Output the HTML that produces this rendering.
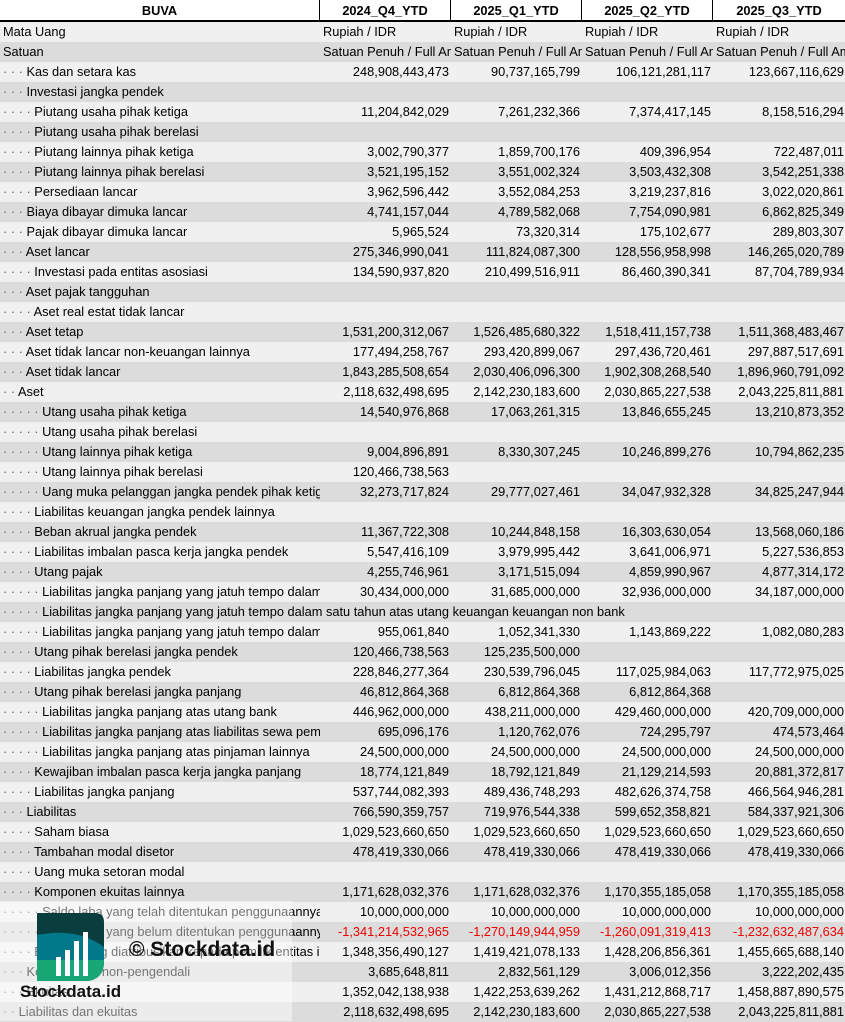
<!DOCTYPE html>
<html><head><meta charset="utf-8"><style>
*{margin:0;padding:0;box-sizing:border-box}
body{width:845px;height:1021px;overflow:hidden;background:#fff;font-family:"Liberation Sans",sans-serif;font-size:12.8px;color:#000;position:relative}
.r{display:flex;height:20px;line-height:20px;white-space:nowrap}
.r:nth-child(odd){background:#f0f0f0}
.r:nth-child(even){background:#dcdcdc}
.r>div{overflow:hidden}
.a{width:320px;padding-left:3px}
.v{width:131px;text-align:right;padding-right:2px}
.v:last-child{width:132px;padding-right:1px}
.d{color:#666}
.n{color:#e00}
.h{display:flex;height:22px;line-height:21px;font-weight:bold;background:#fff;border-bottom:2px solid #000}
.h div{text-align:center;border-right:1px solid #000}
.h div:last-child{border-right:none}
.ov{overflow:visible!important}
.s{text-align:left;padding-left:3px}
</style></head><body>
<div class="h"><div style="width:320px">BUVA</div><div style="width:131px">2024_Q4_YTD</div><div style="width:131px">2025_Q1_YTD</div><div style="width:131px">2025_Q2_YTD</div><div style="width:132px">2025_Q3_YTD</div></div>
<div id="t">
<div class="r"><div class="a">Mata Uang</div><div class="v s">Rupiah / IDR</div><div class="v s">Rupiah / IDR</div><div class="v s">Rupiah / IDR</div><div class="v s">Rupiah / IDR</div></div>
<div class="r"><div class="a">Satuan</div><div class="v s">Satuan Penuh / Full Amount</div><div class="v s">Satuan Penuh / Full Amount</div><div class="v s">Satuan Penuh / Full Amount</div><div class="v s">Satuan Penuh / Full Amount</div></div>
<div class="r"><div class="a"><span class="d">· · · </span>Kas dan setara kas</div><div class="v">248,908,443,473</div><div class="v">90,737,165,799</div><div class="v">106,121,281,117</div><div class="v">123,667,116,629</div></div>
<div class="r"><div class="a"><span class="d">· · · </span>Investasi jangka pendek</div><div class="v"></div><div class="v"></div><div class="v"></div><div class="v"></div></div>
<div class="r"><div class="a"><span class="d">· · · · </span>Piutang usaha pihak ketiga</div><div class="v">11,204,842,029</div><div class="v">7,261,232,366</div><div class="v">7,374,417,145</div><div class="v">8,158,516,294</div></div>
<div class="r"><div class="a"><span class="d">· · · · </span>Piutang usaha pihak berelasi</div><div class="v"></div><div class="v"></div><div class="v"></div><div class="v"></div></div>
<div class="r"><div class="a"><span class="d">· · · · </span>Piutang lainnya pihak ketiga</div><div class="v">3,002,790,377</div><div class="v">1,859,700,176</div><div class="v">409,396,954</div><div class="v">722,487,011</div></div>
<div class="r"><div class="a"><span class="d">· · · · </span>Piutang lainnya pihak berelasi</div><div class="v">3,521,195,152</div><div class="v">3,551,002,324</div><div class="v">3,503,432,308</div><div class="v">3,542,251,338</div></div>
<div class="r"><div class="a"><span class="d">· · · · </span>Persediaan lancar</div><div class="v">3,962,596,442</div><div class="v">3,552,084,253</div><div class="v">3,219,237,816</div><div class="v">3,022,020,861</div></div>
<div class="r"><div class="a"><span class="d">· · · </span>Biaya dibayar dimuka lancar</div><div class="v">4,741,157,044</div><div class="v">4,789,582,068</div><div class="v">7,754,090,981</div><div class="v">6,862,825,349</div></div>
<div class="r"><div class="a"><span class="d">· · · </span>Pajak dibayar dimuka lancar</div><div class="v">5,965,524</div><div class="v">73,320,314</div><div class="v">175,102,677</div><div class="v">289,803,307</div></div>
<div class="r"><div class="a"><span class="d">· · · </span>Aset lancar</div><div class="v">275,346,990,041</div><div class="v">111,824,087,300</div><div class="v">128,556,958,998</div><div class="v">146,265,020,789</div></div>
<div class="r"><div class="a"><span class="d">· · · · </span>Investasi pada entitas asosiasi</div><div class="v">134,590,937,820</div><div class="v">210,499,516,911</div><div class="v">86,460,390,341</div><div class="v">87,704,789,934</div></div>
<div class="r"><div class="a"><span class="d">· · · </span>Aset pajak tangguhan</div><div class="v"></div><div class="v"></div><div class="v"></div><div class="v"></div></div>
<div class="r"><div class="a"><span class="d">· · · · </span>Aset real estat tidak lancar</div><div class="v"></div><div class="v"></div><div class="v"></div><div class="v"></div></div>
<div class="r"><div class="a"><span class="d">· · · </span>Aset tetap</div><div class="v">1,531,200,312,067</div><div class="v">1,526,485,680,322</div><div class="v">1,518,411,157,738</div><div class="v">1,511,368,483,467</div></div>
<div class="r"><div class="a"><span class="d">· · · </span>Aset tidak lancar non-keuangan lainnya</div><div class="v">177,494,258,767</div><div class="v">293,420,899,067</div><div class="v">297,436,720,461</div><div class="v">297,887,517,691</div></div>
<div class="r"><div class="a"><span class="d">· · · </span>Aset tidak lancar</div><div class="v">1,843,285,508,654</div><div class="v">2,030,406,096,300</div><div class="v">1,902,308,268,540</div><div class="v">1,896,960,791,092</div></div>
<div class="r"><div class="a"><span class="d">· · </span>Aset</div><div class="v">2,118,632,498,695</div><div class="v">2,142,230,183,600</div><div class="v">2,030,865,227,538</div><div class="v">2,043,225,811,881</div></div>
<div class="r"><div class="a"><span class="d">· · · · · </span>Utang usaha pihak ketiga</div><div class="v">14,540,976,868</div><div class="v">17,063,261,315</div><div class="v">13,846,655,245</div><div class="v">13,210,873,352</div></div>
<div class="r"><div class="a"><span class="d">· · · · · </span>Utang usaha pihak berelasi</div><div class="v"></div><div class="v"></div><div class="v"></div><div class="v"></div></div>
<div class="r"><div class="a"><span class="d">· · · · · </span>Utang lainnya pihak ketiga</div><div class="v">9,004,896,891</div><div class="v">8,330,307,245</div><div class="v">10,246,899,276</div><div class="v">10,794,862,235</div></div>
<div class="r"><div class="a"><span class="d">· · · · · </span>Utang lainnya pihak berelasi</div><div class="v">120,466,738,563</div><div class="v"></div><div class="v"></div><div class="v"></div></div>
<div class="r"><div class="a"><span class="d">· · · · · </span>Uang muka pelanggan jangka pendek pihak ketiga</div><div class="v">32,273,717,824</div><div class="v">29,777,027,461</div><div class="v">34,047,932,328</div><div class="v">34,825,247,944</div></div>
<div class="r"><div class="a"><span class="d">· · · · </span>Liabilitas keuangan jangka pendek lainnya</div><div class="v"></div><div class="v"></div><div class="v"></div><div class="v"></div></div>
<div class="r"><div class="a"><span class="d">· · · · </span>Beban akrual jangka pendek</div><div class="v">11,367,722,308</div><div class="v">10,244,848,158</div><div class="v">16,303,630,054</div><div class="v">13,568,060,186</div></div>
<div class="r"><div class="a"><span class="d">· · · · </span>Liabilitas imbalan pasca kerja jangka pendek</div><div class="v">5,547,416,109</div><div class="v">3,979,995,442</div><div class="v">3,641,006,971</div><div class="v">5,227,536,853</div></div>
<div class="r"><div class="a"><span class="d">· · · · </span>Utang pajak</div><div class="v">4,255,746,961</div><div class="v">3,171,515,094</div><div class="v">4,859,990,967</div><div class="v">4,877,314,172</div></div>
<div class="r"><div class="a"><span class="d">· · · · · </span>Liabilitas jangka panjang yang jatuh tempo dalam satu</div><div class="v">30,434,000,000</div><div class="v">31,685,000,000</div><div class="v">32,936,000,000</div><div class="v">34,187,000,000</div></div>
<div class="r"><div class="a ov"><span class="d">· · · · · </span>Liabilitas jangka panjang yang jatuh tempo dalam satu tahun atas utang keuangan keuangan non bank</div></div>
<div class="r"><div class="a"><span class="d">· · · · · </span>Liabilitas jangka panjang yang jatuh tempo dalam satu</div><div class="v">955,061,840</div><div class="v">1,052,341,330</div><div class="v">1,143,869,222</div><div class="v">1,082,080,283</div></div>
<div class="r"><div class="a"><span class="d">· · · · </span>Utang pihak berelasi jangka pendek</div><div class="v">120,466,738,563</div><div class="v">125,235,500,000</div><div class="v"></div><div class="v"></div></div>
<div class="r"><div class="a"><span class="d">· · · · </span>Liabilitas jangka pendek</div><div class="v">228,846,277,364</div><div class="v">230,539,796,045</div><div class="v">117,025,984,063</div><div class="v">117,772,975,025</div></div>
<div class="r"><div class="a"><span class="d">· · · · </span>Utang pihak berelasi jangka panjang</div><div class="v">46,812,864,368</div><div class="v">6,812,864,368</div><div class="v">6,812,864,368</div><div class="v"></div></div>
<div class="r"><div class="a"><span class="d">· · · · · </span>Liabilitas jangka panjang atas utang bank</div><div class="v">446,962,000,000</div><div class="v">438,211,000,000</div><div class="v">429,460,000,000</div><div class="v">420,709,000,000</div></div>
<div class="r"><div class="a"><span class="d">· · · · · </span>Liabilitas jangka panjang atas liabilitas sewa pembiayaan</div><div class="v">695,096,176</div><div class="v">1,120,762,076</div><div class="v">724,295,797</div><div class="v">474,573,464</div></div>
<div class="r"><div class="a"><span class="d">· · · · · </span>Liabilitas jangka panjang atas pinjaman lainnya</div><div class="v">24,500,000,000</div><div class="v">24,500,000,000</div><div class="v">24,500,000,000</div><div class="v">24,500,000,000</div></div>
<div class="r"><div class="a"><span class="d">· · · · </span>Kewajiban imbalan pasca kerja jangka panjang</div><div class="v">18,774,121,849</div><div class="v">18,792,121,849</div><div class="v">21,129,214,593</div><div class="v">20,881,372,817</div></div>
<div class="r"><div class="a"><span class="d">· · · · </span>Liabilitas jangka panjang</div><div class="v">537,744,082,393</div><div class="v">489,436,748,293</div><div class="v">482,626,374,758</div><div class="v">466,564,946,281</div></div>
<div class="r"><div class="a"><span class="d">· · · </span>Liabilitas</div><div class="v">766,590,359,757</div><div class="v">719,976,544,338</div><div class="v">599,652,358,821</div><div class="v">584,337,921,306</div></div>
<div class="r"><div class="a"><span class="d">· · · · </span>Saham biasa</div><div class="v">1,029,523,660,650</div><div class="v">1,029,523,660,650</div><div class="v">1,029,523,660,650</div><div class="v">1,029,523,660,650</div></div>
<div class="r"><div class="a"><span class="d">· · · · </span>Tambahan modal disetor</div><div class="v">478,419,330,066</div><div class="v">478,419,330,066</div><div class="v">478,419,330,066</div><div class="v">478,419,330,066</div></div>
<div class="r"><div class="a"><span class="d">· · · · </span>Uang muka setoran modal</div><div class="v"></div><div class="v"></div><div class="v"></div><div class="v"></div></div>
<div class="r"><div class="a"><span class="d">· · · · </span>Komponen ekuitas lainnya</div><div class="v">1,171,628,032,376</div><div class="v">1,171,628,032,376</div><div class="v">1,170,355,185,058</div><div class="v">1,170,355,185,058</div></div>
<div class="r"><div class="a"><span class="d">· · · · · </span>Saldo laba yang telah ditentukan penggunaannya</div><div class="v">10,000,000,000</div><div class="v">10,000,000,000</div><div class="v">10,000,000,000</div><div class="v">10,000,000,000</div></div>
<div class="r"><div class="a"><span class="d">· · · · · </span>Saldo laba yang belum ditentukan penggunaannya</div><div class="v n">-1,341,214,532,965</div><div class="v n">-1,270,149,944,959</div><div class="v n">-1,260,091,319,413</div><div class="v n">-1,232,632,487,634</div></div>
<div class="r"><div class="a"><span class="d">· · · · </span>Ekuitas yang diatribusikan kepada pemilik entitas induk</div><div class="v">1,348,356,490,127</div><div class="v">1,419,421,078,133</div><div class="v">1,428,206,856,361</div><div class="v">1,455,665,688,140</div></div>
<div class="r"><div class="a"><span class="d">· · · </span>Kepentingan non-pengendali</div><div class="v">3,685,648,811</div><div class="v">2,832,561,129</div><div class="v">3,006,012,356</div><div class="v">3,222,202,435</div></div>
<div class="r"><div class="a"><span class="d">· · · </span>Ekuitas</div><div class="v">1,352,042,138,938</div><div class="v">1,422,253,639,262</div><div class="v">1,431,212,868,717</div><div class="v">1,458,887,890,575</div></div>
<div class="r"><div class="a"><span class="d">· · </span>Liabilitas dan ekuitas</div><div class="v">2,118,632,498,695</div><div class="v">2,142,230,183,600</div><div class="v">2,030,865,227,538</div><div class="v">2,043,225,811,881</div></div>
</div>
<div style="position:absolute;left:0;top:901px;width:292px;height:120px;background:rgba(255,255,255,0.45)"></div>
<svg style="position:absolute;left:37px;top:913px" width="67" height="68" viewBox="0 0 67 68">
<defs><clipPath id="c"><path d="M0 0H58Q67 0 67 9V48Q67 68 47 68H0Z"/></clipPath></defs>
<g clip-path="url(#c)">
<rect width="67" height="68" fill="#0a3d3e"/>
<path d="M0 22Q40 14 67 34V68H0Z" fill="#01798a"/>
<path d="M0 47H67V68H0Z" fill="#1aa776"/>
</g>
<rect x="19" y="44" width="5" height="19" fill="#fff"/>
<rect x="28" y="37" width="5" height="26" fill="#fff"/>
<rect x="37" y="28" width="5" height="35" fill="#fff"/>
<rect x="46" y="19" width="5" height="44" fill="#fff"/>
</svg>
<div style="position:absolute;left:129px;top:936px;font-weight:bold;font-size:21px;line-height:28px;color:#111">© Stockdata.id</div>
<div style="position:absolute;left:20px;top:981px;font-weight:bold;font-size:17px;line-height:22px;color:#111">Stockdata.id</div>
</body></html>
